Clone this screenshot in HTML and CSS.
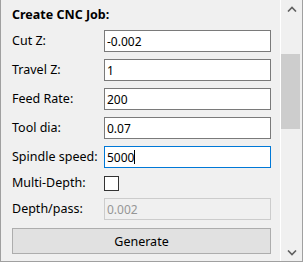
FILE: index.html
```html
<!DOCTYPE html>
<html lang="en">
<head>
    <meta charset="UTF-8">
    <title>Create CNC Job</title>
    <link rel="stylesheet" href="styles.css">
</head>
<body>
    <div class="panel">
        <div class="content">
            <div class="title">Create CNC Job:</div>
            <div class="form">
                <label>Cut Z:</label>
                <input class="field" type="text" value="-0.002">

                <label>Travel Z:</label>
                <input class="field" type="text" value="1">

                <label>Feed Rate:</label>
                <input class="field" type="text" value="200">

                <label>Tool dia:</label>
                <input class="field" type="text" value="0.07">

                <label>Spindle speed:</label>
                <div class="field focused">5000<span class="caret"></span></div>

                <label class="check-label">Multi-Depth:</label>
                <div class="check-row"><span class="checkbox"></span></div>

                <label>Depth/pass:</label>
                <input class="field" type="text" value="0.002" disabled>

                <button class="generate">Generate</button>
            </div>
        </div>

        <!-- Scrollbar -->
        <div class="scrollbar">
            <div class="arrow">
                <svg width="10" height="6" viewBox="0 0 10 6">
                    <polyline points="1,5.5 5,1.5 9,5.5" fill="none" stroke="#606060" stroke-width="1.6"/>
                </svg>
            </div>
            <div class="track">
                <div class="thumb"></div>
            </div>
            <div class="arrow">
                <svg width="10" height="6" viewBox="0 0 10 6">
                    <polyline points="1,0.5 5,4.5 9,0.5" fill="none" stroke="#606060" stroke-width="1.6"/>
                </svg>
            </div>
        </div>
    </div>
</body>
</html>
```

FILE: styles.css
```css
/* General */
body {
    margin: 0;
    font-family: 'Noto Sans', 'Liberation Sans', sans-serif;
    font-size: 12.5px;
    color: #000;
}

/* Panel frame */
.panel {
    width: 303px;
    height: 262px;
    box-sizing: border-box;
    display: flex;
    background: #f0f0f0;
    border: 1px solid #a0a0a0;
    border-top: none;
    overflow: hidden;
}

.content {
    flex: 1;
    padding-left: 11px;
}

.title {
    height: 30px;
    line-height: 30px;
    font-weight: bold;
}

/* Form grid */
.form {
    display: grid;
    grid-template-columns: 92px 167px;
    row-gap: 7px;
    align-items: center;
}

.form label {
    line-height: 22px;
}

.field {
    box-sizing: border-box;
    height: 22px;
    width: 167px;
    margin: 0;
    padding: 0 2px;
    border: 1px solid #7a7a7a;
    background: #fff;
    font-family: inherit;
    font-size: 12px;
    color: #000;
    outline: none;
}

div.field {
    display: flex;
    align-items: center;
}

.field.focused {
    border-color: #0078d7;
}

.caret {
    width: 1px;
    height: 14px;
    background: #000;
}

.field:disabled {
    background: #f0f0f0;
    border-color: #cccccc;
    color: #969696;
}

.form .check-label {
    line-height: 16px;
}

.check-row {
    height: 16px;
    display: flex;
    align-items: center;
}

.checkbox {
    width: 15px;
    height: 15px;
    box-sizing: border-box;
    border: 1px solid #333;
    background: #fff;
}

.generate {
    grid-column: span 2;
    height: 26px;
    margin-top: 1px;
    border: 1px solid #adadad;
    background: #e1e1e1;
    font-family: inherit;
    font-size: 12.5px;
    color: #000;
    padding: 0;
}

/* Scrollbar */
.scrollbar {
    width: 21px;
    display: flex;
    flex-direction: column;
    border-left: 1px solid #fff;
    background: #f0f0f0;
}

.arrow {
    height: 17px;
    display: flex;
    justify-content: center;
    align-items: center;
    padding-left: 1px;
}

.track {
    flex: 1;
}

.thumb {
    width: 19px;
    height: 75px;
    margin-top: 37px;
    background: #cdcdcd;
}
```
